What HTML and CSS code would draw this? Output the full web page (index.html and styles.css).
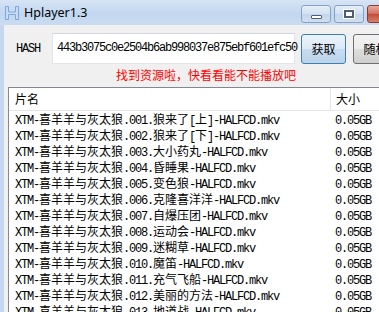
FILE: index.html
```html
<!DOCTYPE html>
<html>

<head>
    <title>Hplayer1.3</title>
    <link rel="stylesheet" href="styles.css">
</head>

<body>
    <div class="window">
        <!-- Title bar -->
        <div class="titlebar">
            <svg class="app-icon" width="16" height="16" viewBox="0 0 16 16">
                <path d="M1.5 1.5h3v5.5h7v-5.5h3v13h-3v-5h-7v5h-3z" fill="#c9dcf6" stroke="#7ea6e0" stroke-width="1"/>
            </svg>
            <span class="title">Hplayer1.3</span>
            <div class="controls">
                <div class="ctl"><span class="min-glyph"></span></div>
                <div class="ctl"><span class="max-glyph"></span></div>
                <div class="ctl close"></div>
            </div>
        </div>

        <!-- Client area -->
        <div class="client">
            <div class="hash-row">
                <label class="hash-label lat">HASH</label>
                <div class="hash-input lat">443b3075c0e2504b6ab998037e875ebf601efc50</div>
                <button class="btn default">获取</button>
                <button class="btn">随机</button>
            </div>

            <div class="status">找到资源啦，快看看能不能播放吧</div>

            <div class="list">
                <div class="list-head">
                    <div class="col-name">片名</div>
                    <div class="col-size">大小</div>
                </div>
                <div id="listBody"></div>
            </div>
        </div>
    </div>

    <script>
        // Episode titles
        const episodes = ['狼来了[上]', '狼来了[下]', '大小药丸', '昏睡果', '变色狼', '克隆喜洋洋',
            '自爆压团', '运动会', '迷糊草', '魔笛', '充气飞船', '美丽的方法', '地道战'];

        // Wrap latin runs so they get half-width spacing
        function mark(text) {
            return text.replace(/[\x20-\x7e]+/g, m => '<span class="lat">' + m + '</span>');
        }

        const body = document.getElementById('listBody');
        for (let i = 0; i < episodes.length; i++) {
            const num = String(i + 1).padStart(3, '0');
            const name = 'XTM-喜羊羊与灰太狼.' + num + '.' + episodes[i] + '-HALFCD.mkv';
            const row = document.createElement('div');
            row.className = 'list-row';
            row.innerHTML = '<div class="col-name">' + mark(name) + '</div>' +
                '<div class="col-size"><span class="lat">0.05GB</span></div>';
            body.appendChild(row);
        }
    </script>
</body>

</html>
```

FILE: styles.css
```css
/* Page */
body {
    margin: 0;
    width: 379px;
    height: 312px;
    overflow: hidden;
    font-family: "Noto Sans CJK SC", sans-serif;
    font-size: 12px;
    color: #000;
}

.window {
    width: 420px;
    height: 312px;
    background: #c4d7ee;
}

/* Latin text in half-width cells */
.lat {
    font-family: "Liberation Mono", monospace;
    letter-spacing: -1.2px;
}

/* Title bar */
.titlebar {
    height: 25px;
    display: flex;
    align-items: center;
    padding-left: 4px;
    background: linear-gradient(#d6e4f5, #c2d7ef 55%, #c9dcf1);
}

.app-icon {
    margin-right: 4px;
}

.title {
    font-family: "Noto Sans", sans-serif;
    font-size: 12.5px;
    flex: 1;
}

.controls {
    display: flex;
    gap: 3px;
    align-self: flex-start;
    margin-top: 5px;
    margin-right: 9px;
}

.ctl {
    width: 28px;
    height: 16px;
    border: 1px solid #8aa2c1;
    border-radius: 3px;
    background: linear-gradient(#e6eef8, #d2e0f1 50%, #c3d5ec 51%, #d0dff1);
    display: flex;
    align-items: center;
    justify-content: center;
}

.min-glyph {
    width: 9px;
    height: 2px;
    margin-top: 5px;
    background: #fff;
    border: 1px solid #4d5d73;
    border-radius: 1px;
}

.max-glyph {
    width: 6px;
    height: 4px;
    background: #fff;
    border: 2px solid #4d5d73;
    outline: 1px solid #fff;
}

.ctl.close {
    width: 42px;
    border-color: #8c3a32;
    background: linear-gradient(#e9a99c, #d0705e 50%, #c44a34 51%, #d5826c);
}

/* Client area */
.client {
    margin-left: 4px;
    height: 287px;
    padding: 0 4px;
    background: #f0f0f0;
}

.hash-row {
    display: flex;
    align-items: center;
    padding-top: 8px;
}

.hash-label {
    width: 36px;
    margin-left: 8px;
}

.hash-input {
    width: 237px;
    height: 29px;
    line-height: 29px;
    padding-left: 4px;
    background: #fff;
    border: 1px solid #e1e4ea;
    border-top-color: #d2d6de;
}

.btn {
    height: 30px;
    width: 45px;
    margin-left: 6px;
    padding: 0;
    font-family: "Noto Sans CJK SC", sans-serif;
    font-size: 12px;
    border: 1px solid #707070;
    border-radius: 3px;
    background: linear-gradient(#f2f2f2, #ebebeb 50%, #dddddd 51%, #cfcfcf);
}

.btn.default {
    border-color: #3c7fb1;
    background: linear-gradient(#eaf3fb, #dce9f5 50%, #c7dcee 51%, #bcd3ea);
}

.btn + .btn {
    margin-left: 7px;
}

.status {
    margin: 4px 0 0 108px;
    height: 14px;
    line-height: 14px;
    color: #f00;
}

/* File list */
.list {
    margin-top: 5px;
    height: 240px;
    background: #fff;
    border: 1px solid #828790;
    border-right: none;
}

.list-head {
    display: flex;
    height: 22px;
    line-height: 22px;
    border-bottom: 1px solid #e5e5e5;
}

.list-head .col-name {
    border-right: 1px solid #e5e5e5;
}

.list-row {
    display: flex;
    height: 16px;
    line-height: 16px;
    white-space: nowrap;
}

.col-name {
    width: 315px;
    padding-left: 6px;
}

.col-size {
    padding-left: 5px;
}
```
